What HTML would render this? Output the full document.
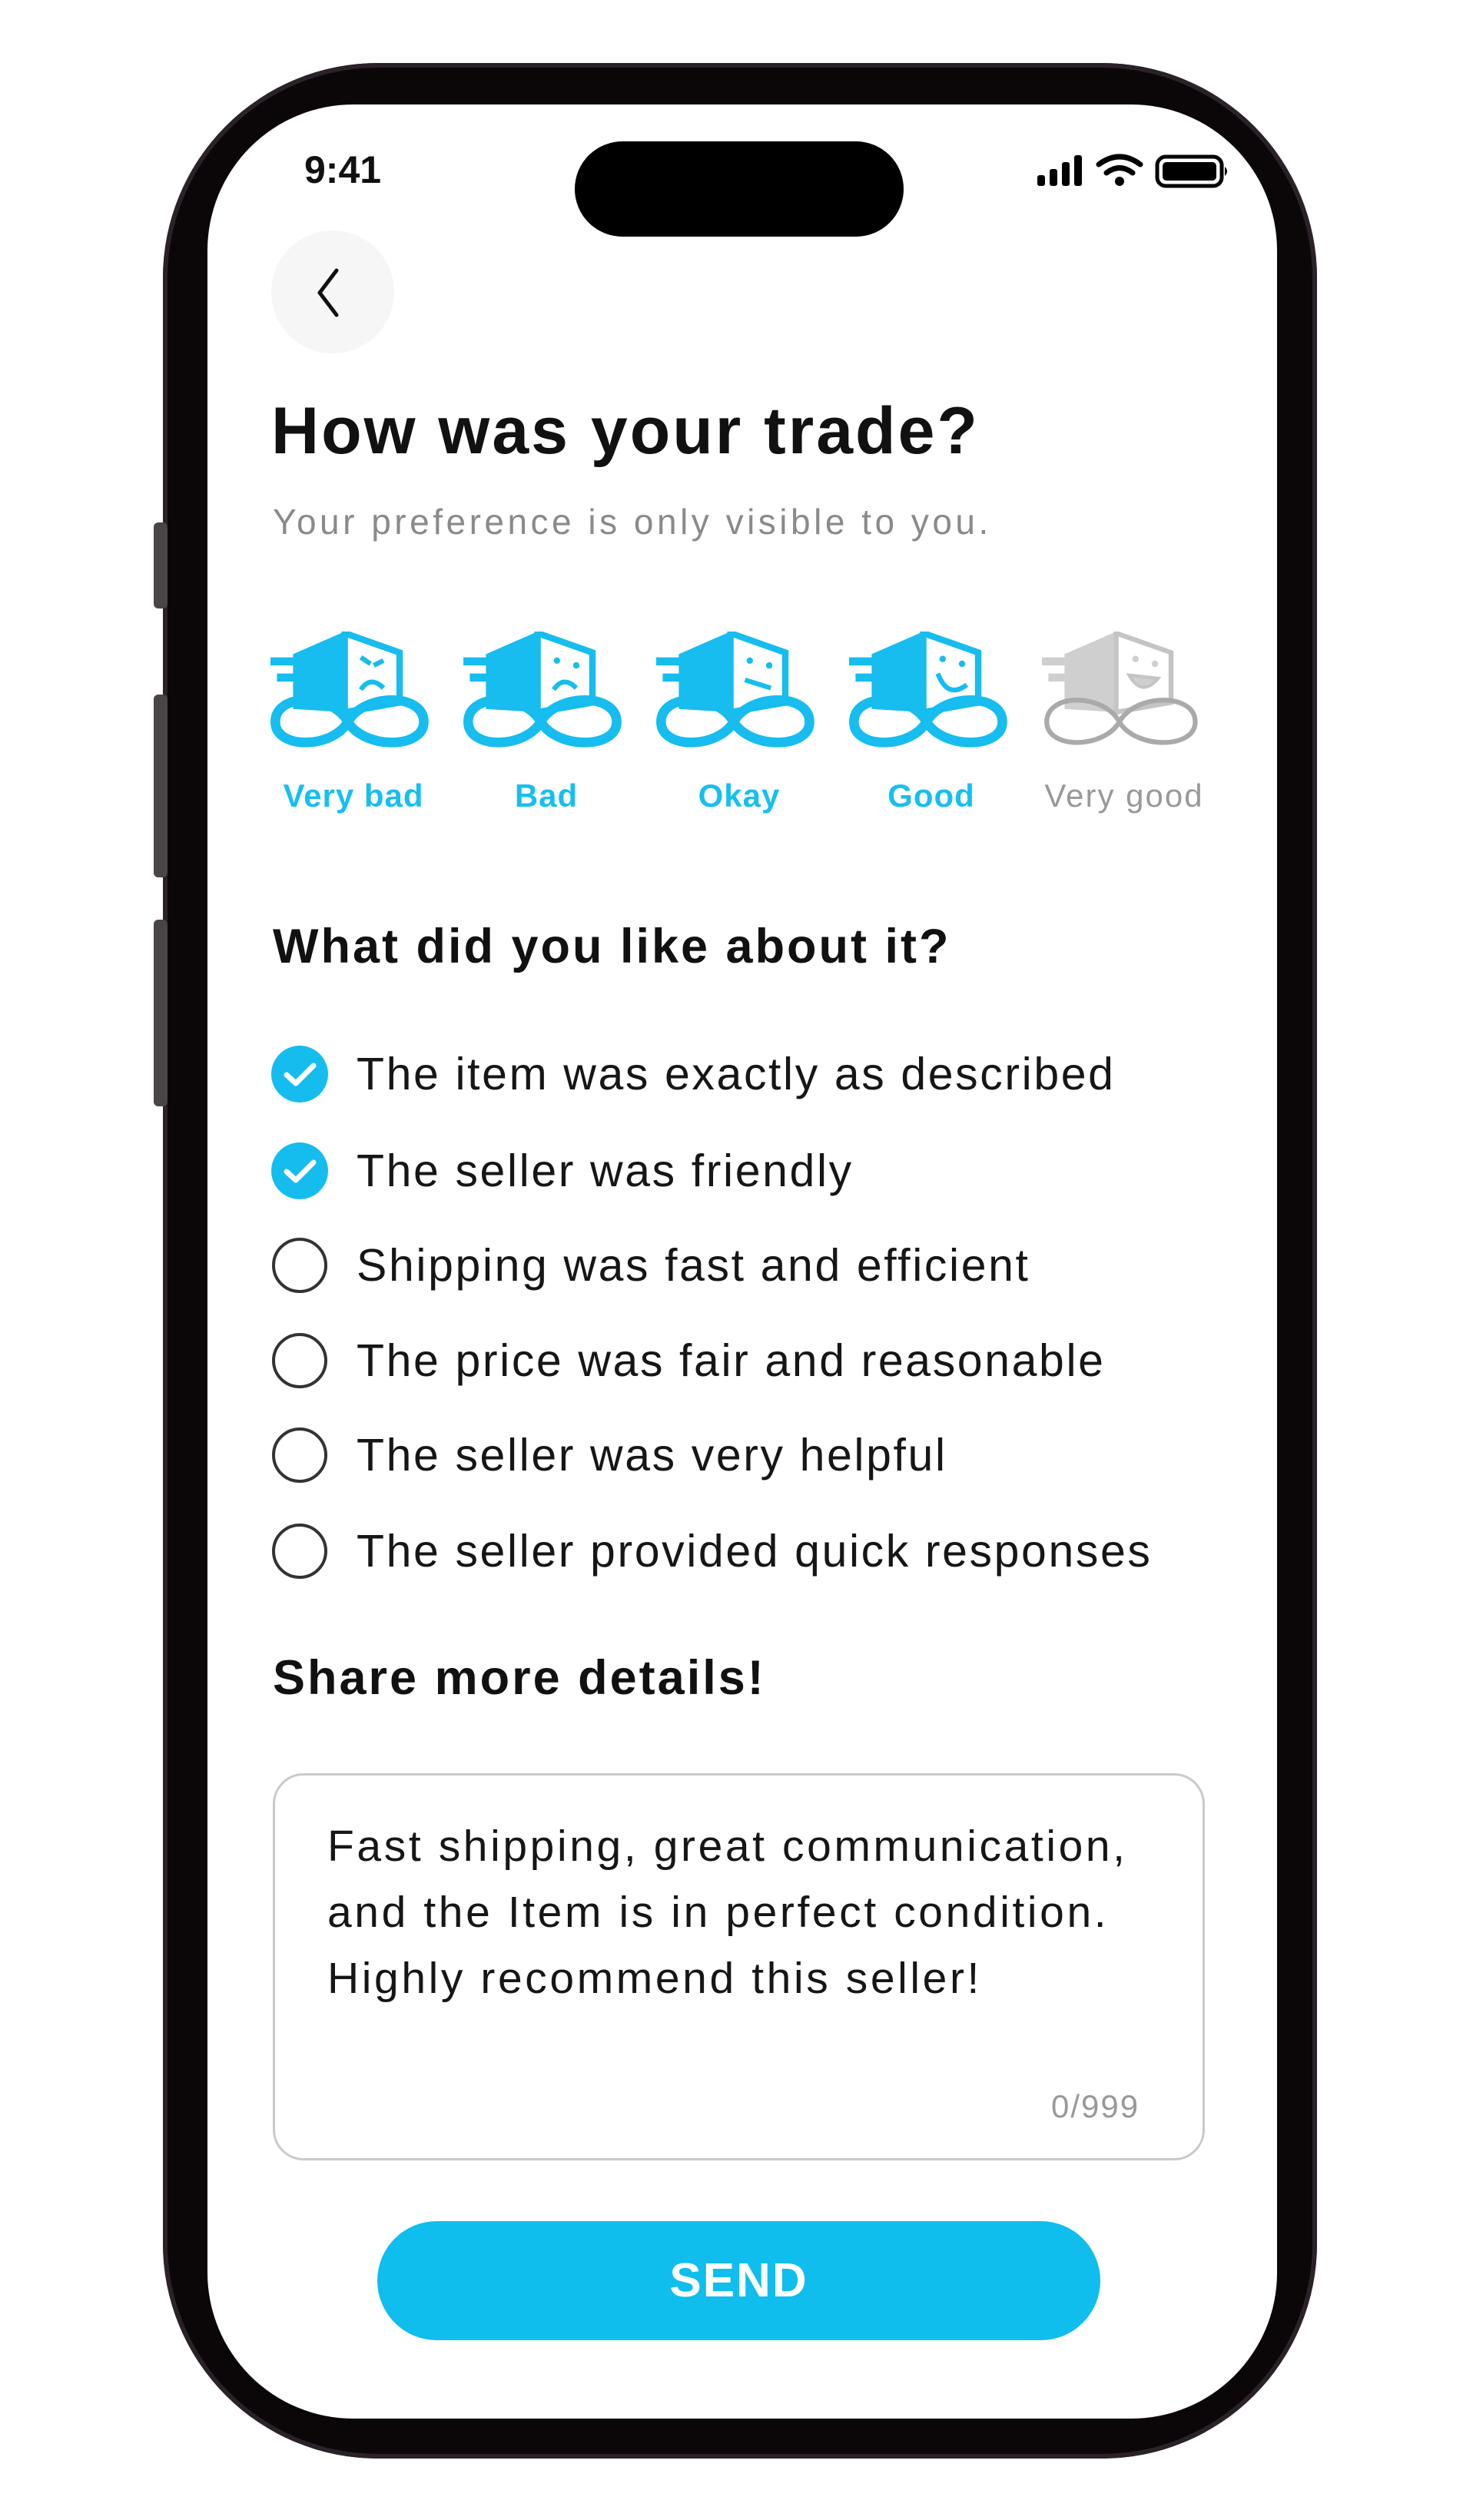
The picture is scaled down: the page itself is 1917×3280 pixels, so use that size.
<!DOCTYPE html>
<html><head><meta charset="utf-8"><style>
*{margin:0;padding:0;box-sizing:border-box}
body{width:1917px;height:3280px;background:#fff;position:relative;overflow:hidden;font-family:"Liberation Sans",sans-serif;color:#111}
.abs{position:absolute}
.frame{left:212px;top:82px;width:1502px;height:3118px;border-radius:280px;background:#0b0709;box-shadow:inset 0 0 0 6px #2a2228}
.btn{background:#4a4448;border-radius:6px;width:18px;left:200px}
.screen{left:270px;top:136px;width:1392px;height:3012px;border-radius:190px;background:#fff;overflow:hidden}
.island{left:748px;top:184px;width:428px;height:124px;border-radius:62px;background:#000}
.lbl{position:absolute;top:1012px;font-size:42px;font-weight:bold;color:#17bff0;text-align:center;width:240px;letter-spacing:1px}
.row{position:absolute;left:353px;height:76px;display:flex;align-items:center;font-size:59px;color:#161616;letter-spacing:2.6px}
.c{width:74px;height:74px;border-radius:50%;margin-right:37px;flex:none}
.c.on{background:#15bdee}
.c.off{border:4px solid #333;width:72px;height:72px;margin-left:1px;margin-right:38px}
h2{position:absolute;font-size:63px;font-weight:bold;left:355px;letter-spacing:3px}
</style></head><body>
<div class="abs frame"></div>
<div class="abs btn" style="top:680px;height:112px"></div>
<div class="abs btn" style="top:904px;height:238px"></div>
<div class="abs btn" style="top:1197px;height:243px"></div>
<div class="abs screen"></div>
<div class="abs island"></div>
<div class="abs" style="left:396px;top:192px;font-size:50px;font-weight:bold">9:41</div>
<svg class="abs" style="left:1348px;top:198px" width="250" height="50" viewBox="0 0 250 50">
<rect x="2" y="30" width="10" height="14" rx="3" fill="#000"/><rect x="18" y="22" width="10" height="22" rx="3" fill="#000"/><rect x="34" y="13" width="10" height="31" rx="3" fill="#000"/><rect x="50" y="4" width="10" height="40" rx="3" fill="#000"/>
<path d="M82 16 Q109 -4 136 16" stroke="#000" stroke-width="7" fill="none" stroke-linecap="round"/><path d="M92 27 Q109 14 126 27" stroke="#000" stroke-width="7" fill="none" stroke-linecap="round"/><circle cx="109" cy="38" r="6" fill="#000"/>
<rect x="158" y="6" width="84" height="38" rx="11" fill="none" stroke="#000" stroke-width="5"/><rect x="165" y="13" width="70" height="24" rx="5" fill="#000"/><path d="M246 19 q6 6 0 12z" fill="#000"/>
</svg>
<div class="abs" style="left:353px;top:300px;width:160px;height:160px;border-radius:50%;background:#f6f6f6"></div>
<svg class="abs" style="left:408px;top:348px" width="40" height="66" viewBox="0 0 40 66"><path d="M30 4 L8 33 L30 62" stroke="#111" stroke-width="5" fill="none" stroke-linecap="round" stroke-linejoin="round"/></svg>
<div class="abs" style="left:353px;top:512px;font-size:86px;font-weight:bold;letter-spacing:3px">How was your trade?</div>
<div class="abs" style="left:355px;top:652px;font-size:46px;color:#8a8a8a;letter-spacing:4.5px">Your preference is only visible to you.</div>

<div class="abs" style="left:352px;top:822px">
<svg width="1240" height="156" viewBox="0 0 1240 156">
<g fill="#16bdee" stroke="#16bdee">
 <g transform="translate(0,0) scale(2.1)"><polygon points="46,0 14,14 14,16 0,16 0,21 14,21 14,26 4,26 4,31 14,31 14,48 46,50" stroke="none"/><polygon points="46,1 80,13 80,44 46,50" fill="#fff" stroke-width="4"/><path d="M56 16 l6 4 M70 18 l-6 3 M56 36 q6 -9 14 -1" fill="none" stroke-width="3"/><path d="M48 56 C38 38 3 38 3 56 C3 73 38 73 48 56 C58 38 95 38 95 56 C95 73 58 73 48 56Z" fill="none" stroke-width="6"/></g>
 <g transform="translate(251,0) scale(2.1)"><polygon points="46,0 14,14 14,16 0,16 0,21 14,21 14,26 4,26 4,31 14,31 14,48 46,50" stroke="none"/><polygon points="46,1 80,13 80,44 46,50" fill="#fff" stroke-width="4"/><circle cx="58" cy="18" r="2" stroke="none"/><circle cx="70" cy="21" r="2" stroke="none"/><path d="M56 36 q6 -9 14 -1" fill="none" stroke-width="3"/><path d="M48 56 C38 38 3 38 3 56 C3 73 38 73 48 56 C58 38 95 38 95 56 C95 73 58 73 48 56Z" fill="none" stroke-width="6"/></g>
 <g transform="translate(502,0) scale(2.1)"><polygon points="46,0 14,14 14,16 0,16 0,21 14,21 14,26 4,26 4,31 14,31 14,48 46,50" stroke="none"/><polygon points="46,1 80,13 80,44 46,50" fill="#fff" stroke-width="4"/><circle cx="58" cy="18" r="2" stroke="none"/><circle cx="70" cy="21" r="2" stroke="none"/><path d="M55 30 l16 5" fill="none" stroke-width="3"/><path d="M48 56 C38 38 3 38 3 56 C3 73 38 73 48 56 C58 38 95 38 95 56 C95 73 58 73 48 56Z" fill="none" stroke-width="6"/></g>
 <g transform="translate(753,0) scale(2.1)"><polygon points="46,0 14,14 14,16 0,16 0,21 14,21 14,26 4,26 4,31 14,31 14,48 46,50" stroke="none"/><polygon points="46,1 80,13 80,44 46,50" fill="#fff" stroke-width="4"/><circle cx="58" cy="17" r="2" stroke="none"/><circle cx="70" cy="20" r="2" stroke="none"/><path d="M55 26 q6 16 18 7" fill="none" stroke-width="3"/><path d="M48 56 C38 38 3 38 3 56 C3 73 38 73 48 56 C58 38 95 38 95 56 C95 73 58 73 48 56Z" fill="none" stroke-width="6"/></g>
</g>
<g fill="#cfcfcf" stroke="#c4c4c4">
 <g transform="translate(1004,0) scale(2.1)"><polygon points="46,0 14,14 14,16 0,16 0,21 14,21 14,26 4,26 4,31 14,31 14,48 46,50" stroke="none"/><polygon points="46,1 80,13 80,44 46,50" fill="#fff" stroke-width="3"/><circle cx="58" cy="17" r="2" stroke="none"/><circle cx="70" cy="20" r="2" stroke="none"/><path d="M54 27 q8 14 18 2z" stroke-width="2"/><path d="M48 56 C38 38 3 38 3 56 C3 73 38 73 48 56 C58 38 95 38 95 56 C95 73 58 73 48 56Z" fill="none" stroke-width="3" stroke="#aaa"/></g>
</g>
</svg></div>
<div class="lbl" style="left:340px">Very bad</div>
<div class="lbl" style="left:591px">Bad</div>
<div class="lbl" style="left:842px">Okay</div>
<div class="lbl" style="left:1092px">Good</div>
<div class="lbl" style="left:1343px;color:#999;font-weight:normal;letter-spacing:2px">Very good</div>

<h2 style="top:1196px">What did you like about it?</h2>
<div class="row" style="top:1360px"><svg class="c on" viewBox="0 0 74 74"><path d="M20 38 L32 49 L55 26" stroke="#fff" stroke-width="7" fill="none" stroke-linecap="round" stroke-linejoin="round"/></svg>The item was exactly as described</div>
<div class="row" style="top:1486px"><svg class="c on" viewBox="0 0 74 74"><path d="M20 38 L32 49 L55 26" stroke="#fff" stroke-width="7" fill="none" stroke-linecap="round" stroke-linejoin="round"/></svg>The seller was friendly</div>
<div class="row" style="top:1609px"><div class="c off"></div>Shipping was fast and efficient</div>
<div class="row" style="top:1733px"><div class="c off"></div>The price was fair and reasonable</div>
<div class="row" style="top:1856px"><div class="c off"></div>The seller was very helpful</div>
<div class="row" style="top:1981px"><div class="c off"></div>The seller provided quick responses</div>

<h2 style="top:2148px">Share more details!</h2>
<div class="abs" style="left:355px;top:2308px;width:1213px;height:504px;border:3px solid #c9c9c9;border-radius:40px"></div>
<div class="abs" style="left:426px;top:2360px;font-size:57px;line-height:86px;color:#161616;letter-spacing:3.6px">Fast shipping, great communication,<br>and the Item is in perfect condition.<br>Highly recommend this seller!</div>
<div class="abs" style="left:1368px;top:2718px;font-size:42px;color:#999;letter-spacing:2px">0/999</div>
<div class="abs" style="left:491px;top:2891px;width:941px;height:155px;border-radius:78px;background:#0fbeec;color:#fff;font-size:62px;font-weight:bold;display:flex;align-items:center;justify-content:center;letter-spacing:2px">SEND</div>
</body></html>
